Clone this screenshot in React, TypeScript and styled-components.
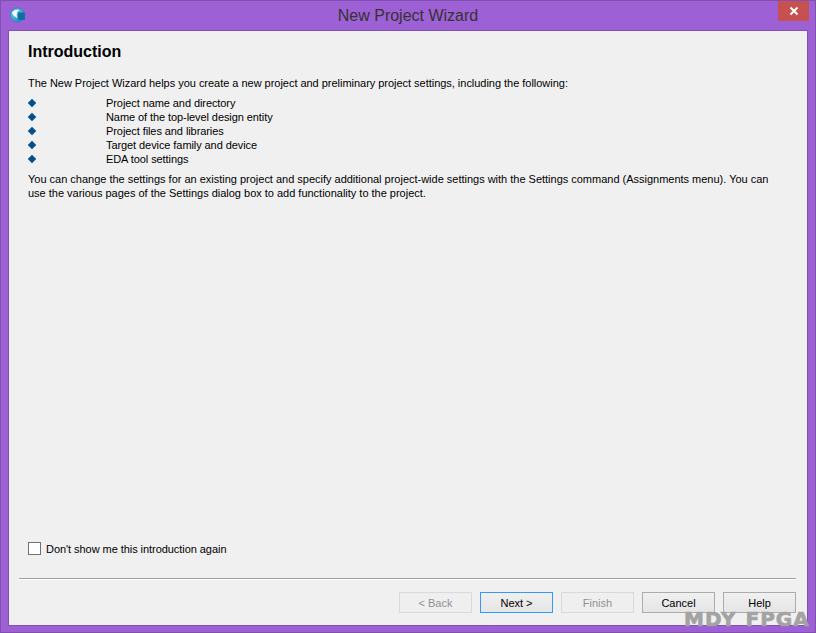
import styled, { createGlobalStyle } from "styled-components";

const items = [
  "Project name and directory",
  "Name of the top-level design entity",
  "Project files and libraries",
  "Target device family and device",
  "EDA tool settings",
];

const App = () => {
  return (
    <>
      <GlobalStyle />
      <Window>
        <TitleBar>
          <AppIcon viewBox="0 0 16 16">
            <defs>
              <linearGradient id="globe" x1="0" y1="0" x2="1" y2="1">
                <stop offset="0" stopColor="#7fd0ee" />
                <stop offset="1" stopColor="#0f7fb5" />
              </linearGradient>
            </defs>
            <circle cx="7.5" cy="8" r="7" fill="url(#globe)" stroke="#1b86b8" strokeWidth="0.8" />
            <path d="M2 5.5 C4 3 7 2.5 9.5 3 C7 4.5 6 7 7.5 11 C4.5 10 2.5 8 2 5.5 Z" fill="#f2fafd" />
            <rect x="8" y="5.5" width="7" height="7.5" rx="1" fill="#0d6ea6" />
          </AppIcon>
          <Title>New Project Wizard</Title>
          <CloseButton aria-label="Close">
            <svg width="10" height="10" viewBox="0 0 10 10">
              <path d="M1.5 1.5 L8.5 8.5 M8.5 1.5 L1.5 8.5" stroke="#fff" strokeWidth="2" />
            </svg>
          </CloseButton>
        </TitleBar>
        <Client>
          <Page>
            <Heading>Introduction</Heading>
            <Intro>
              The New Project Wizard helps you create a new project and preliminary project settings,
              including the following:
            </Intro>
            <BulletList>
              {items.map((item) => (
                <BulletRow key={item}>
                  <Diamond />
                  <span>{item}</span>
                </BulletRow>
              ))}
            </BulletList>
            <Paragraph>
              You can change the settings for an existing project and specify additional project-wide
              settings with the Settings command (Assignments menu). You can use the various pages of
              the Settings dialog box to add functionality to the project.
            </Paragraph>
            <CheckRow>
              <CheckBox />
              <CheckLabel>Don't show me this introduction again</CheckLabel>
            </CheckRow>
          </Page>
          <Separator />
          <ButtonRow>
            <WizardButton disabled>&lt; Back</WizardButton>
            <WizardButton $primary>Next &gt;</WizardButton>
            <WizardButton disabled>Finish</WizardButton>
            <WizardButton>Cancel</WizardButton>
            <WizardButton>Help</WizardButton>
          </ButtonRow>
        </Client>
        <Watermark>MDY FPGA</Watermark>
      </Window>
    </>
  );
};

const GlobalStyle = createGlobalStyle`
  html, body {
    margin: 0;
    padding: 0;
    background: #9e60d5;
  }
`;

const Window = styled.div`
  position: relative;
  box-sizing: border-box;
  width: 816px;
  height: 633px;
  display: flex;
  flex-direction: column;
  padding: 0 7px 6px;
  background: #9e60d5;
  border: 1px solid #7f50ad;
  font-family: "Liberation Sans", Arial, sans-serif;
  font-size: 11px;
  color: #000;
  overflow: hidden;
`;

const TitleBar = styled.div`
  position: relative;
  height: 29px;
  flex: none;
  display: flex;
  align-items: center;
  justify-content: center;
`;

const AppIcon = styled.svg`
  position: absolute;
  left: 2px;
  top: 6px;
  width: 16px;
  height: 16px;
`;

const Title = styled.div`
  font-size: 16px;
  color: #333;
  margin-top: 1px;
`;

const CloseButton = styled.div`
  position: absolute;
  right: -1px;
  top: 0;
  width: 31px;
  height: 20px;
  background: #c75050;
  display: flex;
  align-items: center;
  justify-content: center;
`;

const Client = styled.div`
  flex: 1;
  min-height: 0;
  display: flex;
  flex-direction: column;
  background: #f0f0f0;
  border: 1px solid #8350b5;
`;

const Page = styled.div`
  flex: 1;
  min-height: 0;
  display: flex;
  flex-direction: column;
  padding: 11px 19px 0;
`;

const Heading = styled.h1`
  margin: 0;
  font-size: 16px;
  line-height: 19px;
  font-weight: bold;
`;

const Intro = styled.div`
  margin-top: 15px;
  line-height: 14px;
  letter-spacing: -0.027px;
`;

const BulletList = styled.div`
  margin-top: 6px;
  display: flex;
  flex-direction: column;
  letter-spacing: -0.08px;
`;

const BulletRow = styled.div`
  height: 14px;
  line-height: 14px;
  display: flex;
  align-items: center;
`;

const Diamond = styled.i`
  flex: none;
  width: 6px;
  height: 6px;
  margin: 0 71px 0 1px;
  background: #03508c;
  transform: rotate(45deg);
`;

const Paragraph = styled.div`
  margin-top: 6px;
  width: 750px;
  line-height: 14px;
  letter-spacing: -0.01px;
`;

const CheckRow = styled.label`
  margin-top: auto;
  margin-bottom: 22px;
  display: flex;
  align-items: flex-start;
  gap: 5px;
  line-height: 14px;
`;

const CheckBox = styled.span`
  box-sizing: border-box;
  width: 13px;
  height: 13px;
  background: #fff;
  border: 1px solid #707070;
`;

const CheckLabel = styled.span`
  letter-spacing: -0.055px;
`;

const Separator = styled.div`
  flex: none;
  height: 1px;
  margin: 0 11px 0 10px;
  background: #a0a0a0;
  box-shadow: 0 1px 0 #fff;
`;

const ButtonRow = styled.div`
  flex: none;
  height: 46px;
  padding: 13px 11px 0 0;
  box-sizing: border-box;
  display: flex;
  justify-content: flex-end;
  gap: 8px;
`;

const WizardButton = styled.button<{ $primary?: boolean }>`
  box-sizing: border-box;
  width: 73px;
  height: 21px;
  padding: 0;
  font-family: inherit;
  font-size: 11px;
  color: #000;
  background: linear-gradient(#f0f0f0, #e5e5e5);
  border: 1px solid ${(p) => (p.$primary ? "#3399ff" : "#acacac")};

  &:disabled {
    color: #8f8f8f;
    background: #efefef;
    border-color: #d9d9d9;
  }
`;

const Watermark = styled.div`
  position: absolute;
  left: 683px;
  top: 607px;
  font-family: "DejaVu Sans", sans-serif;
  font-size: 20px;
  line-height: 22px;
  font-weight: bold;
  letter-spacing: 1px;
  word-spacing: 1px;
  white-space: nowrap;
  color: #a3a3a3;
  -webkit-text-stroke: 0.7px #a3a3a3;
`;

export default App;
